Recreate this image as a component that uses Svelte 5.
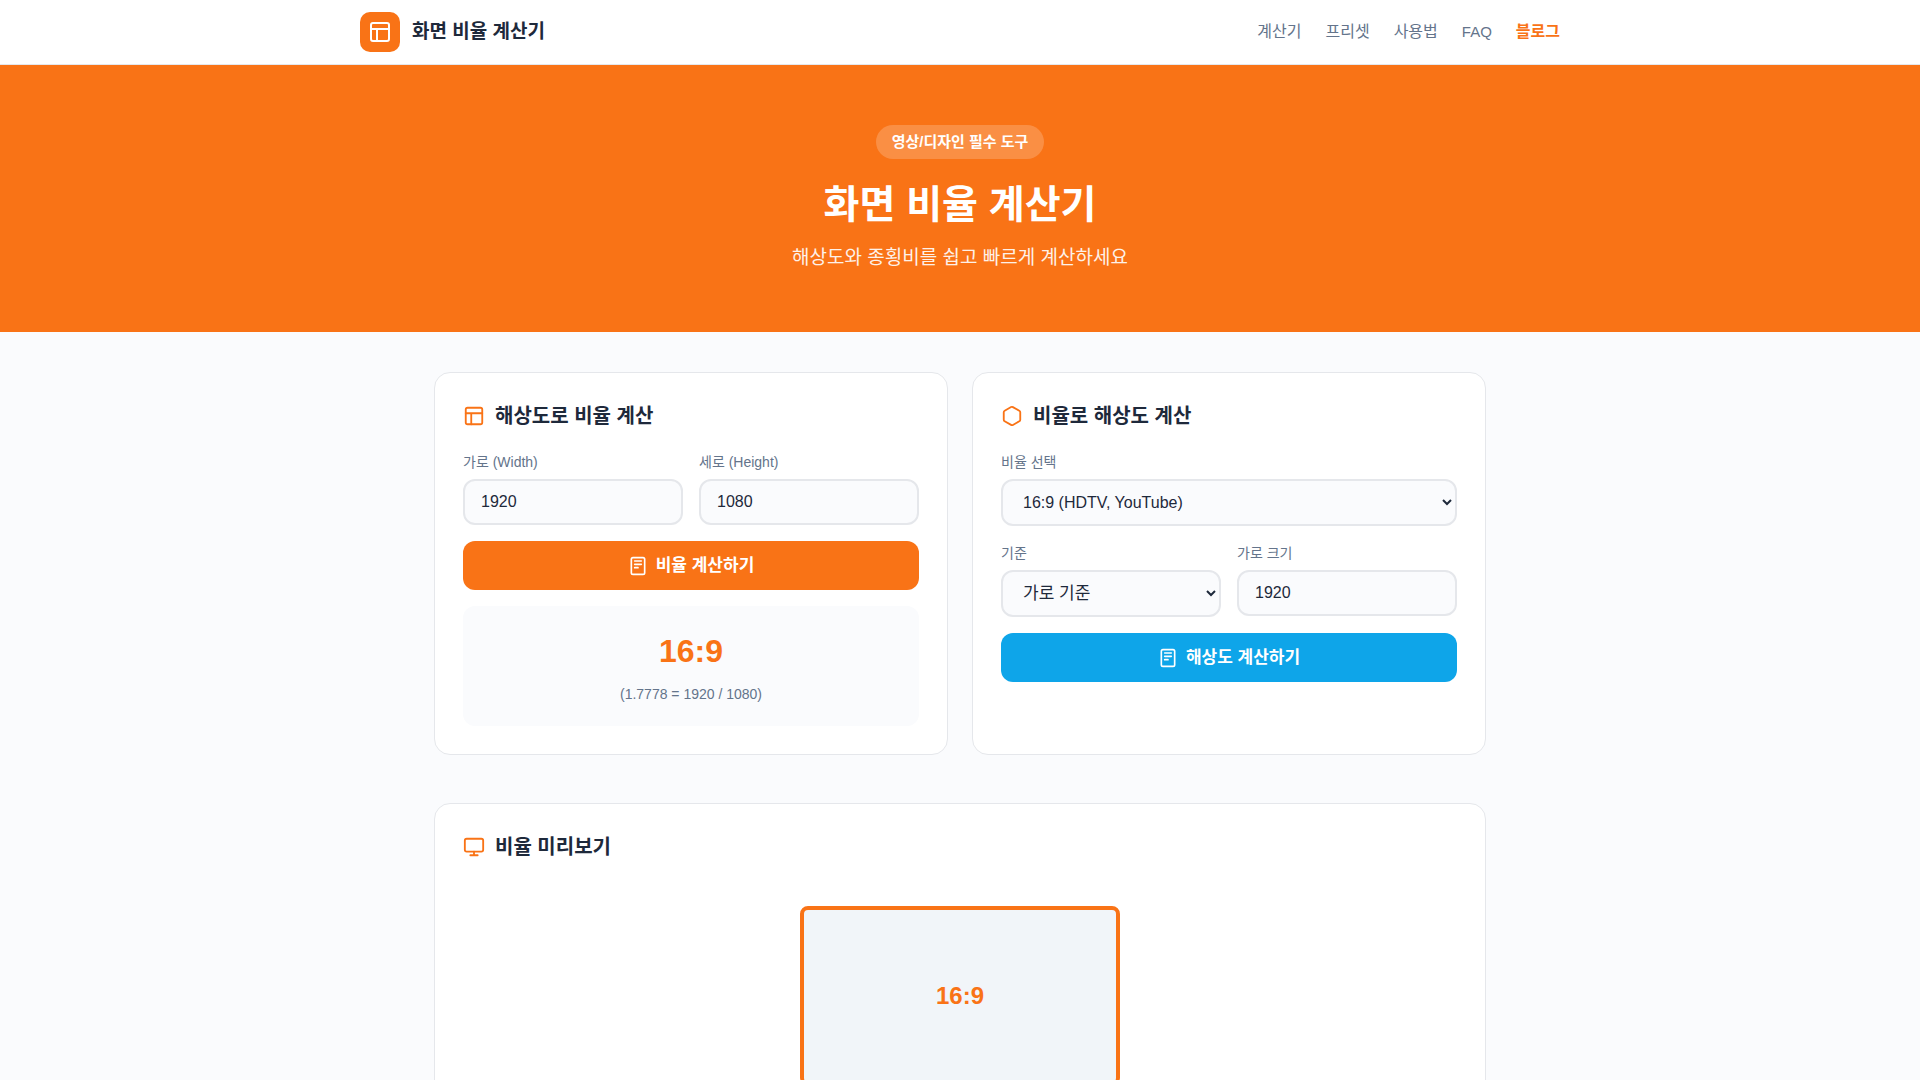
<script>
  const links = [
    { label: '계산기', href: '#calculator' },
    { label: '프리셋', href: '#presets' },
    { label: '사용법', href: '#guide' },
    { label: 'FAQ', href: '#faq', latin: true },
    { label: '블로그', href: '#blog', active: true }
  ];
  const ratios = ['16:9 (HDTV, YouTube)', '4:3', '21:9', '1:1', '9:16'];

  let width = $state(1920);
  let height = $state(1080);
  let size = $state(1920);
  let result = $state({ ratio: '16:9', detail: '(1.7778 = 1920 / 1080)' });

  const gcd = (a, b) => (b ? gcd(b, a % b) : a);

  function calculate() {
    if (!(width > 0 && height > 0)) return;
    const d = gcd(width, height);
    result = {
      ratio: `${width / d}:${height / d}`,
      detail: `(${(width / height).toFixed(4)} = ${width} / ${height})`
    };
  }
</script>

{#snippet layoutIcon()}
  <svg class="icon" viewBox="0 0 24 24" aria-hidden="true">
    <rect x="3" y="3" width="18" height="18" rx="2" />
    <path d="M3 9h18M9 21V9" />
  </svg>
{/snippet}

{#snippet calcIcon()}
  <svg class="icon" viewBox="0 0 24 24" aria-hidden="true">
    <rect x="4" y="2" width="16" height="20" rx="2" />
    <path d="M8 6h8M8 10h8M8 14h4" />
  </svg>
{/snippet}

<header>
  <div class="bar">
    <a class="logo" href="#top">
      <span class="mark">{@render layoutIcon()}</span>
      <span>화면 비율 계산기</span>
    </a>
    <nav>
      {#each links as link}
        <a href={link.href} class:active={link.active} class:latin={link.latin}>{link.label}</a>
      {/each}
    </nav>
  </div>
</header>

<section class="hero">
  <span class="badge">영상/디자인 필수 도구</span>
  <h1>화면 비율 계산기</h1>
  <p>해상도와 종횡비를 쉽고 빠르게 계산하세요</p>
</section>

<main>
  <div class="cards" id="calculator">
    <section class="card">
      <h2>{@render layoutIcon()}해상도로 비율 계산</h2>
      <div class="pair">
        <div class="field">
          <label for="width">가로 (Width)</label>
          <input id="width" type="number" bind:value={width} />
        </div>
        <div class="field">
          <label for="height">세로 (Height)</label>
          <input id="height" type="number" bind:value={height} />
        </div>
      </div>
      <button type="button" onclick={calculate}>{@render calcIcon()}비율 계산하기</button>
      <div class="result">
        <strong>{result.ratio}</strong>
        <span>{result.detail}</span>
      </div>
    </section>

    <section class="card">
      <h2>
        <svg class="icon" viewBox="0 0 24 24" aria-hidden="true">
          <path d="M21 16V8a2 2 0 0 0-1-1.73l-7-4a2 2 0 0 0-2 0l-7 4A2 2 0 0 0 3 8v8a2 2 0 0 0 1 1.73l7 4a2 2 0 0 0 2 0l7-4A2 2 0 0 0 21 16z" />
        </svg>비율로 해상도 계산
      </h2>
      <div class="field">
        <label for="ratio">비율 선택</label>
        <select id="ratio">
          {#each ratios as ratio}<option>{ratio}</option>{/each}
        </select>
      </div>
      <div class="pair">
        <div class="field">
          <label for="basis">기준</label>
          <select id="basis" class="hangul">
            <option>가로 기준</option>
            <option>세로 기준</option>
          </select>
        </div>
        <div class="field">
          <label for="size">가로 크기</label>
          <input id="size" type="number" bind:value={size} />
        </div>
      </div>
      <button type="button" class="blue">{@render calcIcon()}해상도 계산하기</button>
    </section>
  </div>

  <section class="card">
    <h2>
      <svg class="icon" viewBox="0 0 24 24" aria-hidden="true">
        <rect x="2" y="3" width="20" height="14" rx="2" />
        <path d="M8 21h8M12 17v4" />
      </svg>비율 미리보기
    </h2>
    <div class="stage">
      <div class="preview">{result.ratio}</div>
    </div>
  </section>
</main>

<style>
  :global(body) {
    margin: 0;
    background: #fafbfd;
    color: #1e293b;
    font-family: 'Liberation Sans', 'Noto Sans CJK KR', sans-serif;
    font-size: 16px;
    line-height: 1.6;
  }
  * { box-sizing: border-box; }
  .icon {
    flex: none;
    width: 22px;
    height: 22px;
    fill: none;
    stroke: currentColor;
    stroke-width: 2;
    stroke-linecap: round;
    stroke-linejoin: round;
  }
  header {
    background: #fff;
    border-bottom: 1px solid #e5e7eb;
  }
  .bar {
    display: flex;
    align-items: center;
    justify-content: space-between;
    max-width: 1248px;
    height: 64px;
    margin: 0 auto;
    padding: 0 24px;
  }
  .logo {
    display: flex;
    align-items: center;
    gap: 12px;
    color: #1e293b;
    font-size: 19px;
    font-weight: 700;
    text-decoration: none;
  }
  .mark {
    display: grid;
    place-items: center;
    width: 40px;
    height: 40px;
    border-radius: 10px;
    background: #f97316;
    color: #fff;
  }
  .mark .icon {
    width: 24px;
    height: 24px;
  }
  nav {
    display: flex;
    align-items: center;
    gap: 24px;
  }
  nav a {
    color: #64748b;
    font-size: 16px;
    text-decoration: none;
  }
  nav .latin { font-size: 15px; }
  nav .active {
    color: #f97316;
    font-weight: 700;
  }
  .hero {
    display: flex;
    flex-direction: column;
    align-items: center;
    padding: 60px 24px;
    background: #f97316;
    color: #fff;
    text-align: center;
  }
  .badge {
    margin-bottom: 20px;
    padding: 6px 16px;
    border-radius: 20px;
    background: rgba(255, 255, 255, 0.2);
    font-size: 15px;
    font-weight: 700;
    line-height: 22px;
  }
  h1 {
    margin: 0 0 12px;
    font-size: 39px;
    line-height: 52px;
  }
  .hero p {
    margin: 0;
    font-size: 19px;
    line-height: 29px;
    opacity: 0.9;
  }
  main {
    display: grid;
    gap: 48px;
    max-width: 1100px;
    margin: 0 auto;
    padding: 40px 24px;
  }
  .cards {
    display: grid;
    grid-template-columns: repeat(auto-fit, minmax(400px, 1fr));
    gap: 24px;
  }
  .card {
    padding: 28px;
    border: 1px solid #e5e7eb;
    border-radius: 16px;
    background: #fff;
  }
  h2 {
    display: flex;
    align-items: center;
    gap: 10px;
    margin: 0 0 20px;
    font-size: 20px;
    line-height: 30px;
  }
  h2 .icon { color: #f97316; }
  .pair {
    display: grid;
    grid-template-columns: 1fr 1fr;
    gap: 16px;
  }
  .field { margin-bottom: 16px; }
  label {
    display: block;
    margin-bottom: 6px;
    color: #64748b;
    font-size: 14px;
    line-height: 22px;
  }
  input,
  select {
    display: block;
    width: 100%;
    height: 46px;
    padding: 12px 16px;
    border: 2px solid #e5e7eb;
    border-radius: 12px;
    background: #fafbfd;
    color: #1e293b;
    font-family: inherit;
    font-size: 16px;
  }
  input {
    appearance: textfield;
  }
  select {
    height: 47px;
  }
  .hangul {
    padding-block: 8px;
    font-size: 17px;
  }
  button {
    display: flex;
    align-items: center;
    justify-content: center;
    gap: 8px;
    width: 100%;
    padding: 14px;
    border: 0;
    border-radius: 12px;
    background: #f97316;
    color: #fff;
    font-family: inherit;
    font-size: 17px;
    font-weight: 700;
    line-height: 21px;
  }
  button .icon {
    width: 20px;
    height: 20px;
  }
  .blue { background: #0ea5e9; }
  .result {
    display: grid;
    justify-items: center;
    margin-top: 16px;
    padding: 20px;
    border-radius: 12px;
    background: #fafbfd;
  }
  .result strong {
    color: #f97316;
    font-size: 32px;
    line-height: 51px;
  }
  .result span {
    margin-top: 6px;
    color: #64748b;
    font-size: 14px;
    line-height: 23px;
  }
  .stage {
    display: flex;
    justify-content: center;
    padding: 24px;
  }
  .preview {
    display: grid;
    place-items: center;
    width: 320px;
    height: 180px;
    border: 4px solid #f97316;
    border-radius: 8px;
    background: #f1f5f9;
    color: #f97316;
    font-size: 24px;
    font-weight: 700;
  }
</style>
